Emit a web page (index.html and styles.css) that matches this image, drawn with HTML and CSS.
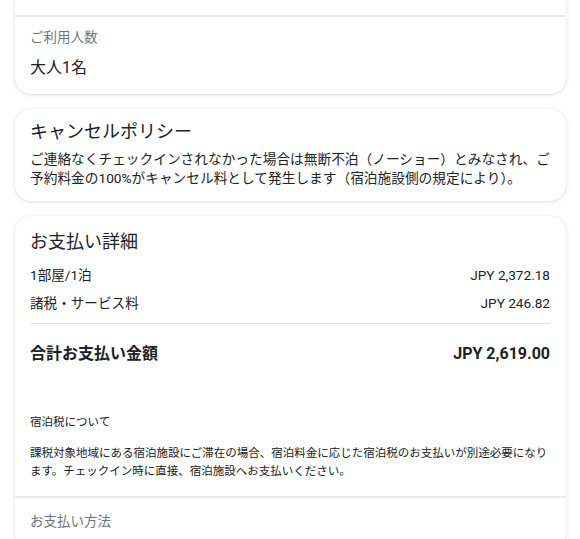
FILE: index.html
```html
<!DOCTYPE html>
<html lang="ja">
<head>
    <meta charset="UTF-8">
    <meta name="viewport" content="width=device-width, initial-scale=1.0">
    <title>ご予約内容の確認</title>
    <link rel="stylesheet" href="styles.css">
</head>
<body>
    <main class="page">

        <section class="card">
            <div class="card-part stay-top"></div>
            <div class="card-part guests">
                <p class="label">ご利用人数</p>
                <p class="value">大人1名</p>
            </div>
        </section>

        <section class="card policy">
            <h2 class="card-title">キャンセルポリシー</h2>
            <p class="policy-text">ご連絡なくチェックインされなかった場合は無断不泊（ノーショー）とみなされ、ご予約料金の100%がキャンセル料として発生します（宿泊施設側の規定により）。</p>
        </section>

        <section class="card payment">
            <div class="card-part price">
                <h2 class="card-title">お支払い詳細</h2>
                <div class="price-row">
                    <span>1部屋/1泊</span>
                    <span>JPY 2,372.18</span>
                </div>
                <div class="price-row">
                    <span>諸税・サービス料</span>
                    <span>JPY 246.82</span>
                </div>
                <div class="price-row total">
                    <span>合計お支払い金額</span>
                    <span>JPY 2,619.00</span>
                </div>

                <div class="tax-note">
                    <p class="tax-title">宿泊税について</p>
                    <p class="tax-text">課税対象地域にある宿泊施設にご滞在の場合、宿泊料金に応じた宿泊税のお支払いが別途必要になります。チェックイン時に直接、宿泊施設へお支払いください。</p>
                </div>
            </div>
            <div class="card-part method">
                <p class="label">お支払い方法</p>
            </div>
        </section>

    </main>
</body>
</html>
```

FILE: styles.css
```css
body {
    margin: 0;
    padding: 0;
    background-color: #ffffff;
    color: #202124;
    font-family: Roboto, "Noto Sans CJK JP", sans-serif;
}

p,
h2 {
    margin: 0;
}

.page {
    display: flex;
    flex-direction: column;
    gap: 15px;
    padding: 0 14px 0 15px;
    margin-top: -40px; /* page is scrolled, first card starts above the top */
}

.card {
    background-color: #ffffff;
    border-radius: 16px;
    box-shadow: 0 1px 4px rgba(0, 0, 0, 0.13), 0 0 1px rgba(0, 0, 0, 0.08);
    overflow: hidden;
}

.card-part {
    padding: 0 16px 0 15px;
}

.card-part + .card-part {
    border-top: 2px solid #ebebeb;
}

.stay-top {
    height: 55px;
}

/* guests */
.guests {
    padding-top: 10px;
    padding-bottom: 14px;
}

.label {
    font-size: 13.5px;
    line-height: 20px;
    color: #70757a;
}

.value {
    margin-top: 9px;
    font-size: 16px;
    line-height: 24px;
}

/* cancel policy */
.card-title {
    font-size: 18px;
    font-weight: 400;
    line-height: 26px;
}

.policy {
    padding: 10px 16px 13px 15px;
}

.policy-text {
    margin-top: 5px;
    font-size: 13.7px;
    line-height: 19px;
}

/* payment details */
.price {
    padding-top: 13px;
    padding-bottom: 16px;
}

.price .card-title {
    margin-bottom: 10px;
}

.price-row {
    display: flex;
    justify-content: space-between;
    font-size: 13.6px;
    line-height: 20px;
    margin-bottom: 8px;
}

.price-row.total {
    margin-top: 10px;
    padding-top: 18px;
    border-top: 1px solid #e3e3e3;
    font-size: 16px;
    font-weight: 700;
    line-height: 24px;
    margin-bottom: 0;
}

.tax-note {
    margin-top: 47px;
    font-size: 11.5px;
    line-height: 18px;
}

.tax-text {
    margin-top: 13px;
}

.method {
    padding-top: 13px;
    padding-bottom: 20px;
}
```
